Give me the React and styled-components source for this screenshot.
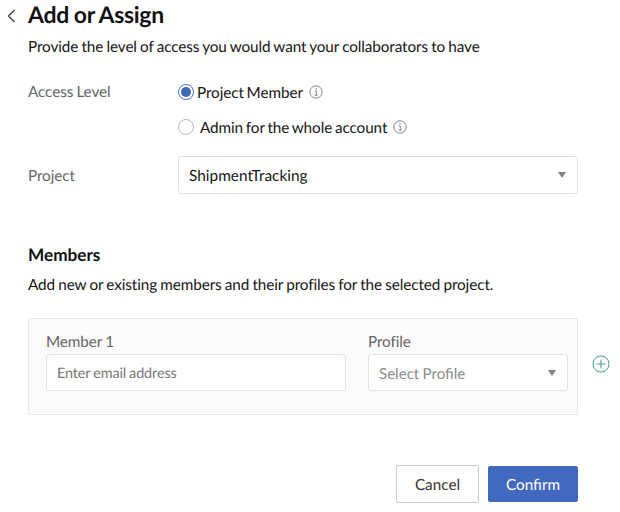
import React from "react";
import styled, { createGlobalStyle } from "styled-components";

const Global = createGlobalStyle`
  html, body { margin: 0; padding: 0; background: #fff; }
  body { font-family: Lato, "Open Sans", sans-serif; color: #111; text-rendering: geometricPrecision; letter-spacing: -0.1px; word-spacing: -0.6px; }
  * { box-sizing: border-box; }
`;

const Page = styled.div`
  width: 620px; height: 512px; overflow: hidden;
  padding: 0 42px 0 28px;
  display: flex; flex-direction: column;
`;
const Header = styled.div`
  display: flex; align-items: center; height: 31px; position: relative;
`;
const Back = styled.svg`
  position: absolute; left: -21px; top: 9px; width: 9px; height: 14px;
`;
const Title = styled.h1`
  margin: 0 0 2px; font-size: 23px; font-weight: 700; line-height: 29px; color: #111; letter-spacing: -0.3px; word-spacing: -0.5px;
`;
const Text = styled.p`
  margin: ${p => p.$mt}px 0 0; font-size: 15.3px; line-height: 20px; color: #161616;
`;
const FormRow = styled.div`
  display: grid; grid-template-columns: 150px 400px; align-items: ${p => p.$align || "center"};
  margin-top: ${p => p.$mt}px;
`;
const Label = styled.div`
  font-size: 15.3px; line-height: 20px; color: #666; padding-top: ${p => p.$pt || 0}px;
`;
const RadioGroup = styled.div`
  display: flex; flex-direction: column; gap: 15px;
`;
const RadioRow = styled.div`
  display: flex; align-items: center; height: 20px;
`;
const Radio = styled.span`
  width: 16px; height: 16px; border-radius: 50%; flex: none;
  margin-right: ${p => p.$gap}px;
  border: 1px solid ${p => (p.$on ? "#4a6fc0" : "#b9b9b9")};
  background: #fff; display: flex; align-items: center; justify-content: center;
  &::after {
    content: ""; width: 10px; height: 10px; border-radius: 50%;
    background: ${p => (p.$on ? "#3f66b8" : "transparent")};
  }
`;
const RadioText = styled.span`
  font-size: 15.3px; line-height: 20px; color: #161616; padding-top: 2px; word-spacing: -1px;
`;
const InfoIcon = styled.svg`
  width: 14px; height: 14px; margin-left: 6px; flex: none;
`;
const SelectBox = styled.div`
  height: ${p => p.$h}px; background: #fff;
  border: 1px solid #e1e1e8; border-radius: 3px;
  display: flex; align-items: center; justify-content: space-between;
  padding: 0 11px 0 10px; font-size: ${p => p.$fs}px;
  color: ${p => p.$muted ? "#8c8c8c" : "#161616"};
`;
const SelectValue = styled.span`
  padding-top: 2px; letter-spacing: 0;
`;
const Caret = styled.span`
  width: 0; height: 0; border-left: 4.5px solid transparent; border-right: 4.5px solid transparent;
  border-top: 6px solid #808080;
`;
const Heading = styled.h2`
  margin: 50px 0 0; font-size: 17.2px; font-weight: 700; line-height: 22px; color: #111; letter-spacing: 0;
`;
const MemberWrap = styled.div`
  position: relative; margin-top: 23px; width: 550px;
`;
const MemberCard = styled.div`
  height: 97px; background: #fbfbfb; border: 1px solid #e6e6e6; border-radius: 2px;
  padding: 13px 10px 0 17px;
  display: grid; grid-template-columns: 300px 200px; column-gap: 22px;
`;
const Field = styled.div`
  display: flex; flex-direction: column; gap: 2px;
`;
const FieldLabel = styled.div`
  font-size: 15.3px; line-height: 19px; color: #666; padding-top: 1px;
`;
const Input = styled.div`
  height: 37px; background: #fff; border: 1px solid #e1e1e8; border-radius: 3px;
  display: flex; align-items: center; padding: 2px 10px 0; font-size: 14.4px; color: #777;
`;
const AddIcon = styled.svg`
  position: absolute; left: 564px; top: 37px; width: 18px; height: 18px;
`;
const Actions = styled.div`
  display: flex; justify-content: flex-end; align-items: center; gap: 9px; width: 550px; margin-top: 50px;
`;
const Button = styled.button`
  font-family: inherit; font-size: 15.3px; border-radius: 2px; cursor: pointer; padding: 2px 0 0;
  text-rendering: geometricPrecision;
  width: ${p => (p.$primary ? 90 : 83)}px;
  height: ${p => (p.$primary ? 36 : 38)}px;
  background: ${p => (p.$primary ? "#4268bf" : "#fff")};
  color: ${p => (p.$primary ? "#fff" : "#333")};
  border: 1px solid ${p => (p.$primary ? "#4268bf" : "#c9c9c9")};
`;

const Info = () => (
  <InfoIcon viewBox="0 0 14 14" fill="none">
    <circle cx="7" cy="7" r="6.2" stroke="#777" strokeWidth="0.9" />
    <rect x="6.5" y="3.2" width="1.1" height="1.3" fill="#777" />
    <path d="M5.8 5.9h1.5v4.2M5.6 10.2h3" stroke="#777" strokeWidth="0.9" />
  </InfoIcon>
);

export default function App() {
  return (
    <Page>
      <Global />
      <Header>
        <Back viewBox="0 0 9 14" fill="none">
          <path d="M7.5 1L1.5 7l6 6" stroke="#444" strokeWidth="1.4" />
        </Back>
        <Title>Add or Assign</Title>
      </Header>
      <Text $mt={6}>Provide the level of access you would want your collaborators to have</Text>
      <FormRow $mt={25} $align="start">
        <Label>Access Level</Label>
        <RadioGroup>
          <RadioRow>
            <Radio $on $gap={3} />
            <RadioText>Project Member</RadioText>
            <Info />
          </RadioRow>
          <RadioRow>
            <Radio $gap={6} />
            <RadioText>Admin for the whole account</RadioText>
            <Info />
          </RadioRow>
        </RadioGroup>
      </FormRow>
      <FormRow $mt={19}>
        <Label $pt={2}>Project</Label>
        <SelectBox $h={38} $fs={15.4}>
          <SelectValue>ShipmentTracking</SelectValue>
          <Caret />
        </SelectBox>
      </FormRow>
      <Heading>Members</Heading>
      <Text $mt={9}>Add new or existing members and their profiles for the selected project.</Text>
      <MemberWrap>
        <MemberCard>
          <Field>
            <FieldLabel>Member 1</FieldLabel>
            <Input>Enter email address</Input>
          </Field>
          <Field>
            <FieldLabel>Profile</FieldLabel>
            <SelectBox $h={37} $fs={15.1} $muted>
              <SelectValue>Select Profile</SelectValue>
              <Caret />
            </SelectBox>
          </Field>
        </MemberCard>
        <AddIcon viewBox="0 0 18 18" fill="none">
          <circle cx="9" cy="9" r="8" stroke="#3f9f78" strokeWidth="1" />
          <path d="M9 4.5v9M4.5 9h9" stroke="#3f9f78" strokeWidth="1" />
        </AddIcon>
      </MemberWrap>
      <Actions>
        <Button>Cancel</Button>
        <Button $primary>Confirm</Button>
      </Actions>
    </Page>
  );
}
